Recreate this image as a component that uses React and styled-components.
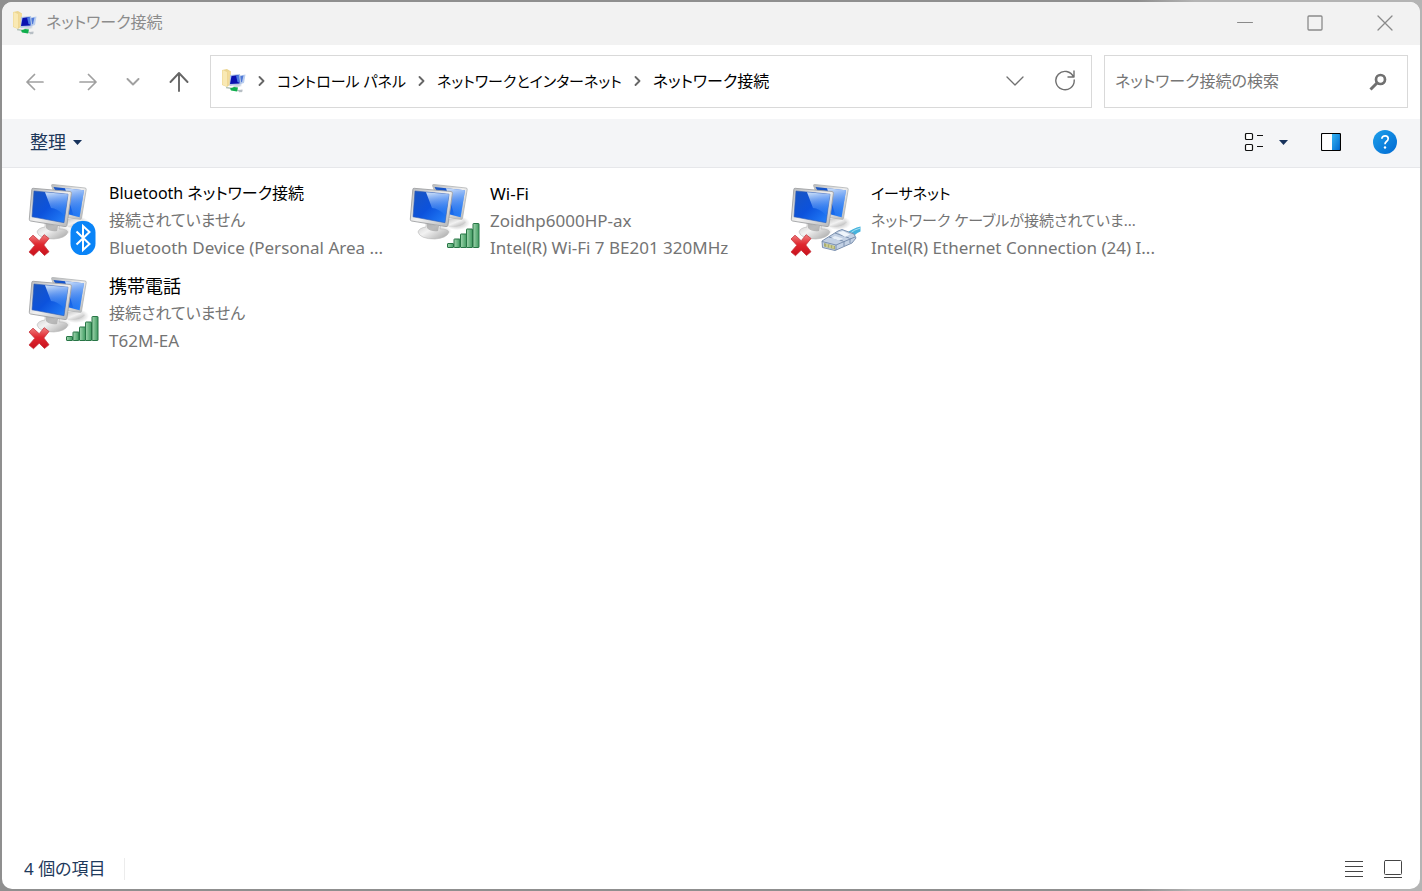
import React from "react";
import styled, { createGlobalStyle } from "styled-components";

const GlobalStyle = createGlobalStyle`
  * { box-sizing: border-box; }
  body {
    margin: 0;
    background: linear-gradient(90deg, #8f8f8f 0%, #8f8f8f 80%, #b4b4b4 84%, #b4b4b4 100%);
    font-family: "Noto Sans", "Noto Sans CJK JP", sans-serif;
    font-size: 17px;
    font-weight: 400;
    line-height: 27px;
    font-feature-settings: "palt";
    color: #000;
  }
  button, input {
    font: inherit;
    font-feature-settings: inherit;
    color: inherit;
  }
  svg { display: block; flex: none; }
`;

const Frame = styled.div`
  min-height: 100vh;
  padding: 2px;
  display: flex;
`;

const Window = styled.div`
  flex: 1;
  min-width: 0;
  display: flex;
  flex-direction: column;
  background: #fff;
  border-radius: 10px;
  overflow: hidden;
`;

const TitleBar = styled.header`
  height: 43px;
  padding: 0 0 2px 11px;
  display: flex;
  align-items: center;
  background: #f2f2f2;
  color: #8c8c8c;
`;

const Title = styled.h1`
  flex: 1;
  margin: 0 0 0 9px;
  font-size: 16px;
  font-weight: inherit;
`;

const PlainButton = styled.button`
  display: flex;
  align-items: center;
  justify-content: center;
  padding: 0;
  border: 0;
  background: transparent;
  width: ${(p) => p.$width || 40}px;
  height: ${(p) => p.$height || 40}px;
  flex: none;
`;

const NavBar = styled.nav`
  height: 74px;
  padding: 0 12px 1px 6px;
  display: flex;
  align-items: center;
`;

const AddressBar = styled.div`
  flex: 1;
  min-width: 0;
  height: 53px;
  margin: 0 12px 0 3px;
  padding: 0 3px 1px 11px;
  display: flex;
  align-items: center;
  border: 1px solid #d9d9d9;
`;

const Crumbs = styled.ol`
  flex: 1;
  margin: 0;
  padding: 0;
  display: flex;
  list-style: none;
`;

const Crumb = styled.li`
  display: flex;
  align-items: center;
  white-space: nowrap;
  font-size: ${(p) => p.$size}px;
`;

const CrumbLink = styled.a`
  color: #000;
  text-decoration: none;
`;

const Separator = styled.span`
  width: 31px;
  display: flex;
  justify-content: center;
`;

const SearchBox = styled.form`
  width: 304px;
  height: 53px;
  padding: 0 9px 0 10px;
  display: flex;
  align-items: center;
  border: 1px solid #d9d9d9;
`;

const SearchInput = styled.input`
  flex: 1;
  min-width: 0;
  padding: 0;
  border: 0;
  outline: 0;
  background: transparent;
  font-size: 16px;
  &::placeholder { color: #767676; opacity: 1; }
`;

const CommandBar = styled.div`
  height: 49px;
  padding: 0 19px 2px 28px;
  display: flex;
  align-items: center;
  background: #f4f5f7;
  border-bottom: 1px solid #e6e7ea;
  color: #1e395b;
`;

const OrganizeButton = styled.button`
  display: flex;
  align-items: center;
  gap: 7px;
  margin-right: auto;
  padding: 0;
  border: 0;
  background: transparent;
  font-size: 18px;
`;

const Items = styled.ul`
  flex: 1;
  margin: 0;
  padding: 12px 0 12px 25px;
  display: grid;
  grid-template-columns: repeat(auto-fill, 381px);
  align-content: start;
  row-gap: 12px;
  list-style: none;
`;

const Item = styled.li`
  display: flex;
  gap: 6px;
`;

const Details = styled.div`
  min-width: 0;
  white-space: nowrap;
`;

const Line = styled.div`
  height: 27px;
  color: ${(p) => (p.$name ? "#000" : "#747474")};
  font-size: ${(p) => p.$size || 17}px;
`;

const StatusBar = styled.footer`
  height: 39px;
  padding: 0 8px 1px 22px;
  display: flex;
  align-items: center;
  color: #1e395b;
`;

const Count = styled.span`
  padding-right: 18px;
  margin-right: auto;
  border-right: 1px solid #ececec;
  line-height: 22px;
`;

const Stroke = ({ w, h, d, color = "#666", width = 1.5 }) => (
  <svg width={w} height={h} viewBox={`0 0 ${w} ${h}`} fill="none" stroke={color}
    strokeWidth={width} strokeLinecap="round" strokeLinejoin="round" aria-hidden="true">
    <path d={d} />
  </svg>
);

const Caret = () => (
  <svg width="9" height="5" viewBox="0 0 9 5" aria-hidden="true">
    <path d="M0 0h9L4.5 5z" fill="#17325c" />
  </svg>
);

const FolderIcon = () => (
  <svg width="24" height="24" viewBox="0 0 24 24" aria-hidden="true">
    <path d="M0 1l5-1 4 2.500V15l-4 3-5-2z" fill="#ecd590" />
    <path d="M.5 1l4.500 2v15L.5 15.500z" fill="#f9e9b4" />
    <path d="M5.500 2l3.500 1v11l-3.500 2z" fill="#f3dc9a" />
    <path d="M15 7l8.500-1.500L22 14l-5 1.500z" fill="#b9cdee" />
    <path d="M17 7.500l4.500-1L20 13l-3 1z" fill="#4f78d8" />
    <path d="M8 6l10-1 1.500 10.500L7.500 17z" fill="#b3c6e6" />
    <path d="M9.500 7l7-1 1 8.500-9.500.5z" fill="#0a12b0" />
    <path d="M14 6.500l3-.5 1 8-2.500-1z" fill="#4d7ce2" />
    <path d="M11 16.500l6-1 3 1.500-8 1.500z" fill="#cfd6de" />
    <path d="M4 18.500l6 1M14 21l6 1.500" stroke="#b4c4bc" strokeWidth="1.500" />
    <path d="M8 19.500l4-1.500 4 .5-1 4-6-1z" fill="#0fae4c" />
    <path d="M16.500 21l4-.5v2l-3 1z" fill="#b7bec5" />
  </svg>
);

const Defs = () => (
  <svg width="0" height="0" style={{ position: "absolute" }} aria-hidden="true">
    <defs>
      <linearGradient id="screen" x1="0" y1="0" x2="1" y2="0.9">
        <stop offset="0" stopColor="#1a55c0" />
        <stop offset="0.5" stopColor="#0c52dc" />
        <stop offset="1" stopColor="#2380fa" />
      </linearGradient>
      <linearGradient id="shine" x1="0" y1="0" x2="0.15" y2="1">
        <stop offset="0" stopColor="#eaf5ff" stopOpacity="0.9" />
        <stop offset="1" stopColor="#4a98ff" stopOpacity="0.15" />
      </linearGradient>
      <linearGradient id="bezel" x1="0" y1="0" x2="1" y2="1">
        <stop offset="0" stopColor="#b8babc" />
        <stop offset="0.5" stopColor="#f0f0f0" />
        <stop offset="1" stopColor="#b0b2b4" />
      </linearGradient>
      <linearGradient id="base" x1="0" y1="0" x2="1" y2="1">
        <stop offset="0" stopColor="#c4c4c4" />
        <stop offset="0.45" stopColor="#f2f2f2" />
        <stop offset="1" stopColor="#a2a2a2" />
      </linearGradient>
      <radialGradient id="shadow">
        <stop offset="0" stopColor="#777" stopOpacity="0.6" />
        <stop offset="1" stopColor="#777" stopOpacity="0" />
      </radialGradient>
      <linearGradient id="bar" x1="0" y1="0" x2="1" y2="0">
        <stop offset="0" stopColor="#a0d6ae" />
        <stop offset="1" stopColor="#3f9a60" />
      </linearGradient>
      <linearGradient id="cross" x1="0" y1="0" x2="0" y2="1">
        <stop offset="0" stopColor="#f08080" />
        <stop offset="0.45" stopColor="#e02830" />
        <stop offset="1" stopColor="#c8101c" />
      </linearGradient>
      <linearGradient id="pane" x1="0" y1="0" x2="1" y2="1">
        <stop offset="0" stopColor="#37b5f2" />
        <stop offset="1" stopColor="#0069cf" />
      </linearGradient>
      <linearGradient id="help" x1="0" y1="0" x2="1" y2="1">
        <stop offset="0" stopColor="#1ea0ea" />
        <stop offset="1" stopColor="#0069d2" />
      </linearGradient>
    </defs>
  </svg>
);

const Monitors = () => (
  <g>
    <ellipse cx="49" cy="43" rx="13" ry="7" fill="url(#shadow)" />
    <path d="M38 39l14 0 6 3q-4 5-17 5z" fill="url(#base)" />
    <path d="M24.500 5.500q0-1.200 1.300-1L58 8q1.500.2 1.200 1.600l-4.700 28.500q-.3 1.500-1.700 1.200L36 37z" fill="url(#bezel)" stroke="#b0b2b4" strokeWidth=".8" />
    <path d="M26.500 7l30.500 3.200-4.400 27L40 34z" fill="url(#screen)" />
    <path d="M38 8.200l19 2-4.400 27-6-1.500z" fill="url(#shine)" />
    <ellipse cx="27" cy="51" rx="17" ry="6" fill="url(#shadow)" />
    <path d="M18 40l15 2-1 7q8 0 9 3-2 6-14 7-15 0-17-7 1-4 8-5z" fill="url(#base)" stroke="#b8b8b8" strokeWidth=".6" />
    <path d="M19 43l12 3-1 5q-7 1-11-3z" fill="#969696" opacity=".6" />
    <path d="M4.800 9.500q0-1.300 1.400-1.200L43 11.500q1.700.2 1.400 1.800l-4.500 32q-.3 1.600-1.900 1.300L3.600 41q-1.500-.3-1.300-1.800z" fill="url(#bezel)" stroke="#a0a2a4" strokeWidth=".9" />
    <path d="M7 11l34 3.200-4 28.500L5 36.800z" fill="url(#screen)" stroke="#315db2" strokeWidth=".6" />
    <path d="M18 12.200l23 2-3.200 21.500Q30 28 24 28z" fill="url(#shine)" />
  </g>
);

const Cross = () => (
  <path
    d="M2 59l4-3.800 6.200 5.500 5-6 4.800 3.800-5.200 6.500 5.200 6.700-4.500 3.800-5.300-5.300-5.700 5.500-4.500-3.700 5.800-6.700z"
    fill="url(#cross)" stroke="#c8343c" strokeWidth=".8" strokeLinejoin="round" />
);

const Signal = () => (
  <g fill="url(#bar)" stroke="#287546" strokeWidth="1">
    <rect x="39.500" y="63.500" width="6" height="4" rx=".5" />
    <rect x="46" y="59" width="6" height="8.500" rx=".5" />
    <rect x="52.500" y="54" width="6" height="13.500" rx=".5" />
    <rect x="58.500" y="49" width="6" height="18.500" rx=".5" />
    <rect x="65" y="43.500" width="6" height="24" rx=".5" />
  </g>
);

const Bluetooth = () => (
  <g>
    <rect x="43.500" y="41" width="25" height="34" rx="11.500" fill="#0a84f7" />
    <path d="M49.500 51.500L62.500 64 56 70V46l6.500 6-13 12.500" fill="none" stroke="#fff" strokeWidth="2" />
  </g>
);

const Cable = () => (
  <g strokeLinejoin="round">
    <path d="M56 54q8-6 15.500-7.500v5Q65 54 61 61z" fill="#45b3dd" />
    <path d="M60 54q6-5 11.500-6" stroke="#a9e0f2" fill="none" />
    <path d="M33 61l16-10 4-1.500 12 4.500 2 4-4 5-17 7.500-12.500-3z" fill="#c3d1e4" stroke="#7d92b0" />
    <path d="M33 61.500l14 3.500 19-8M47 65v5M40 57l14 4M46 53l14 5M55 61v5M61 58v5" stroke="#7389a9" strokeWidth=".9" fill="none" />
    <path d="M49 52.500l5-1.500 7 3.500-5 2.500z" fill="#eff5fb" />
    <path d="M42 58l4-2 8 2.500-4 2z" fill="#e6eef7" />
    <path d="M35 63l11 3v3.500l-11-3z" fill="#a9ad70" />
    <path d="M38 64v3M41 65v3M44 65.500v3" stroke="#ece7a8" />
  </g>
);

const connections = [
  {
    name: "Bluetooth ネットワーク接続", nameSize: 16,
    status: "接続されていません", statusSize: 16,
    device: "Bluetooth Device (Personal Area ...", Badge: Bluetooth, off: true,
  },
  {
    name: "Wi-Fi", status: "Zoidhp6000HP-ax",
    device: "Intel(R) Wi-Fi 7 BE201 320MHz", Badge: Signal,
  },
  {
    name: "イーサネット", nameSize: 15,
    status: "ネットワーク ケーブルが接続されていま...", statusSize: 15,
    device: "Intel(R) Ethernet Connection (24) I...", Badge: Cable, off: true,
  },
  {
    name: "携帯電話", nameSize: 18,
    status: "接続されていません", statusSize: 16,
    device: "T62M-EA", Badge: Signal, off: true,
  },
];

const path = [
  { label: "コントロール パネル", size: 15 },
  { label: "ネットワークとインターネット", size: 15 },
  { label: "ネットワーク接続", size: 16 },
];

export default function App() {
  return (
    <Frame>
      <GlobalStyle />
      <Defs />
      <Window>
        <TitleBar>
          <FolderIcon />
          <Title>ネットワーク接続</Title>
          <PlainButton $width={70} aria-label="最小化">
            <Stroke w={16} h={16} d="M.5 7.500h15" color="#8a8a8a" width={1} />
          </PlainButton>
          <PlainButton $width={70} aria-label="最大化">
            <Stroke w={16} h={16} d="M2 1h12q1 0 1 1v12q0 1-1 1H2q-1 0-1-1V2q0-1 1-1z" color="#8a8a8a" width={1.3} />
          </PlainButton>
          <PlainButton $width={70} aria-label="閉じる">
            <Stroke w={16} h={16} d="M1 1l14 14M15 1L1 15" color="#8a8a8a" width={1.3} />
          </PlainButton>
        </TitleBar>

        <NavBar aria-label="ナビゲーション">
          <PlainButton $width={53} aria-label="戻る">
            <Stroke w={18} h={18} d="M17 9H1M8.500 1.500L1 9l7.500 7.500" color="#a0a0a0" width={1.7} />
          </PlainButton>
          <PlainButton $width={53} aria-label="進む">
            <Stroke w={18} h={18} d="M1 9h16M9.500 1.500L17 9l-7.500 7.500" color="#a0a0a0" width={1.7} />
          </PlainButton>
          <PlainButton $width={37} aria-label="最近表示した場所">
            <Stroke w={14} h={8} d="M1.500 1L7 6.500 12.500 1" color="#a0a0a0" width={1.9} />
          </PlainButton>
          <PlainButton $width={56} aria-label="上へ">
            <Stroke w={20} h={20} d="M10 19V1M1.500 10L10 1l8.500 9" color="#666" width={1.9} />
          </PlainButton>
          <AddressBar>
            <FolderIcon />
            <Crumbs>
              {path.map(({ label, size }) => (
                <Crumb key={label} $size={size}>
                  <Separator>
                    <Stroke w={7} h={10} d="M1.500 1l4 4-4 4" color="#666" width={1.8} />
                  </Separator>
                  <CrumbLink href="#">{label}</CrumbLink>
                </Crumb>
              ))}
            </Crumbs>
            <PlainButton $width={54} aria-label="以前の場所">
              <Stroke w={18} h={10} d="M1 1l8 8 8-8" color="#707070" width={1.3} />
            </PlainButton>
            <PlainButton $width={46} aria-label="最新の情報に更新">
              <Stroke w={22} h={22} d="M19.500 7A9.200 9.200 0 1 0 20.200 10M20 1v6h-6" color="#707070" width={1.4} />
            </PlainButton>
          </AddressBar>
          <SearchBox role="search">
            <SearchInput type="text" aria-label="ネットワーク接続の検索" placeholder="ネットワーク接続の検索" />
            <PlainButton type="button" aria-label="検索">
              <svg width="18" height="18" viewBox="0 0 18 18" fill="none" stroke="#707070" aria-hidden="true">
                <circle cx="11.500" cy="6.500" r="4.500" strokeWidth="2.700" />
                <path d="M8 10l-6.500 6.500" strokeWidth="3" />
              </svg>
            </PlainButton>
          </SearchBox>
        </NavBar>

        <CommandBar>
          <OrganizeButton>整理<Caret /></OrganizeButton>
          <PlainButton $width={38} aria-label="表示方法">
            <svg width="20" height="20" viewBox="0 0 20 20" fill="#fff" stroke="#111" strokeWidth="1.200" aria-hidden="true">
              <rect x="1.500" y="1.500" width="7" height="6" rx="1" />
              <rect x="1.500" y="12.500" width="7" height="6" rx="1" />
              <path d="M13 3.500h6M13 14.500h6" />
            </svg>
          </PlainButton>
          <PlainButton $width={20} aria-label="その他のオプション"><Caret /></PlainButton>
          <PlainButton $width={76} aria-label="プレビュー ウィンドウ">
            <svg width="20" height="18" viewBox="0 0 20 18" aria-hidden="true">
              <rect x=".5" y=".5" width="19" height="17" rx="1" fill="#fff" />
              <path d="M11 1h8v16h-8z" fill="url(#pane)" />
              <rect x=".5" y=".5" width="19" height="17" rx="1" fill="none" stroke="#000" strokeWidth="1.100" />
            </svg>
          </PlainButton>
          <PlainButton $width={32} aria-label="ヘルプ">
            <svg width="24" height="24" viewBox="0 0 24 24" fill="none" aria-hidden="true">
              <circle cx="12" cy="12" r="12" fill="url(#help)" />
              <path d="M8.800 8.800Q9 5.800 12.200 5.800q3 0 3 2.800 0 1.600-1.700 2.900-1.500 1.200-1.500 2.800" stroke="#fff" strokeWidth="1.700" />
              <circle cx="12" cy="17.500" r="1.200" fill="#fff" />
            </svg>
          </PlainButton>
        </CommandBar>

        <Items>
          {connections.map(({ name, nameSize, status, statusSize, device, Badge, off }) => (
            <Item key={name}>
              <svg width="76" height="81" viewBox="0 0 76 81" aria-hidden="true">
                <Monitors />
                {off && <Cross />}
                <Badge />
              </svg>
              <Details>
                <Line $name $size={nameSize}>{name}</Line>
                <Line $size={statusSize}>{status}</Line>
                <Line>{device}</Line>
              </Details>
            </Item>
          ))}
        </Items>

        <StatusBar>
          <Count>4 個の項目</Count>
          <PlainButton $width={40} $height={30} aria-label="詳細表示">
            <Stroke w={18} h={18} d="M0 1.500h18M0 6.500h18M0 11.500h18M0 16.500h18" color="#444" width={1} />
          </PlainButton>
          <PlainButton $width={38} $height={30} aria-label="大きいアイコン">
            <Stroke w={18} h={18} d="M1.500 .5h15q1 0 1 1v12q0 1-1 1h-15q-1 0-1-1v-12q0-1 1-1zM0 17.500h18" color="#444" width={1} />
          </PlainButton>
        </StatusBar>
      </Window>
    </Frame>
  );
}
